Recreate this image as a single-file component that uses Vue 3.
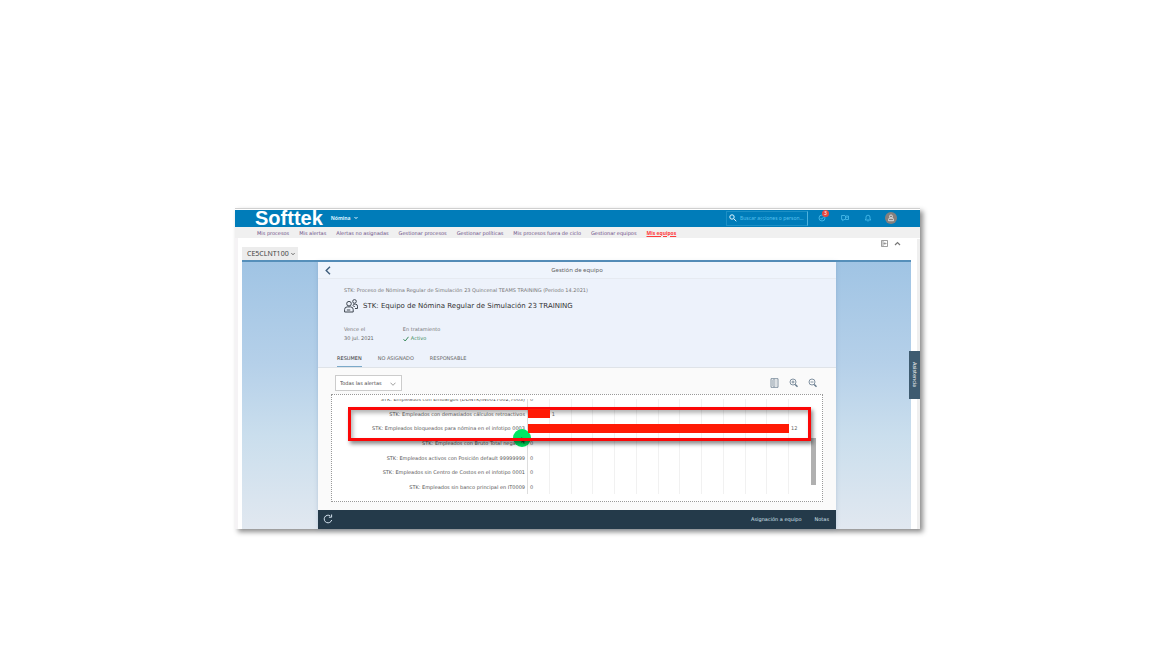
<script setup>
import { ref } from 'vue'

const navItems = [
  'Mis procesos',
  'Mis alertas',
  'Alertas no asignadas',
  'Gestionar procesos',
  'Gestionar políticas',
  'Mis procesos fuera de ciclo',
  'Gestionar equipos',
  'Mis equipos',
]
const tabs = ['RESUMEN', 'NO ASIGNADO', 'RESPONSABLE']
const active = ref('RESUMEN')
const maxValue = 12
const rows = [
  { label: 'STK: Empleados con Embargos (DDNTK/IN0017002,7003)', value: 0 },
  { label: 'STK: Empleados con demasiados cálculos retroactivos', value: 1 },
  { label: 'STK: Empleados bloqueados para nómina en el infotipo 0003', value: 12 },
  { label: 'STK: Empleados con Bruto Total negativo', value: 0 },
  { label: 'STK: Empleados activos con Posición default 99999999', value: 0 },
  { label: 'STK: Empleados sin Centro de Costos en el infotipo 0001', value: 0 },
  { label: 'STK: Empleados sin banco principal en IT0009', value: 0 },
]
</script>

<template>
  <main class="page">
    <div class="frame">
      <header class="topbar">
        <span class="brand">Softtek</span>
        <button class="module">
          Nómina
          <svg width="4" height="4" viewBox="0 0 4 4"><path d="M.5 1l1.5 1.600L3.500 1" /></svg>
        </button>
        <label class="search">
          <svg width="8" height="8" viewBox="0 0 8 8"><circle cx="3" cy="3" r="2.200" /><path d="M4.700 4.700L7.300 7.200" /></svg>
          <input type="text" aria-label="Buscar" placeholder="Buscar acciones o person..." />
        </label>
        <div class="actions">
          <button class="act" aria-label="Tareas">
            <svg width="8" height="8" viewBox="0 0 8 8"><circle cx="4" cy="4" r="3" /><path d="M2.500 4l1.200 1.200L6 2.500" /></svg>
            <span class="badge">3</span>
          </button>
          <button class="act" aria-label="Mensajes">
            <svg width="8" height="8" viewBox="0 0 8 8"><path d="M4 1.500H.6v4h1v1.200L3 5.500h1M4.500 2h3v3.500h-3zM5.200 3.300h1.500" /></svg>
          </button>
          <button class="act" aria-label="Notificaciones">
            <svg width="8" height="8" viewBox="0 0 8 8"><path d="M1.200 6h5.600L6 5V3.200a2 2 0 0 0-4 0V5zM3.400 7h1.200" /></svg>
          </button>
          <button class="avatar" aria-label="Perfil">
            <svg width="12" height="12" viewBox="0 0 12 12"><circle cx="6" cy="4.500" r="1.500" /><path d="M3.500 8.700V7.600a1.500 1.500 0 0 1 1.500-1.500h2a1.500 1.500 0 0 1 1.500 1.500v1.100z" /></svg>
          </button>
        </div>
      </header>

      <nav class="nav">
        <a v-for="(item, i) in navItems" :key="item" href="#" :class="{ current: i === 7 }">{{ item }}</a>
      </nav>

      <section class="workspace">
        <div class="systembar">
          <button class="system">
            CE5CLNT100
            <svg width="4" height="4" viewBox="0 0 4 4"><path d="M.3 1L2 2.800 3.700 1" /></svg>
          </button>
          <div class="tools">
            <button aria-label="Panel">
              <svg width="7" height="7" viewBox="0 0 7 7"><path d="M.5.5h6v6h-6zM2 1v5M3 3.500h2.500M4 2.300L3 3.500l1 1.200" /></svg>
            </button>
            <button aria-label="Contraer">
              <svg width="7" height="7" viewBox="0 0 7 7"><path class="bold" d="M1 5l2.500-2.500L6 5" /></svg>
            </button>
          </div>
        </div>

        <div class="stage">
          <article class="panel">
            <div class="titlebar">
              <button class="back" aria-label="Atrás">
                <svg width="6" height="9" viewBox="0 0 6 9"><path d="M5 .8L1.200 4.500 5 8.200" /></svg>
              </button>
              <h1>Gestión de equipo</h1>
            </div>
            <div class="object">
              <p class="process">STK: Proceso de Nómina Regular de Simulación 23 Quincenal TEAMS TRAINING (Periodo 14.2021)</p>
              <div class="team">
                <svg width="14" height="14" viewBox="0 0 14 14">
                  <circle cx="5" cy="4.700" r="2.300" />
                  <path d="M.6 13v-2.500a2.600 2.600 0 0 1 2.600-2.600h3.400a2.600 2.600 0 0 1 2.600 2.600V13zM2.800 11h3.500" />
                  <circle cx="10.500" cy="2.400" r="1.800" />
                  <path d="M9 5.200h2.500a2 2 0 0 1 2 2v2.300H11M8.600 6.500l2.200 1.200" />
                </svg>
                <h2>STK: Equipo de Nómina Regular de Simulación 23 TRAINING</h2>
              </div>
              <dl class="facts">
                <div><dt>Vence el</dt><dd>30 jul. 2021</dd></div>
                <div>
                  <dt>En tratamiento</dt>
                  <dd class="ok">
                    <svg width="6" height="6" viewBox="0 0 6 6"><path d="M.5 3.200L2.200 5 5.500.8" /></svg>Activo
                  </dd>
                </div>
              </dl>
              <div class="tabs" role="tablist">
                <button
                  v-for="tab in tabs"
                  :key="tab"
                  role="tab"
                  :aria-selected="tab === active"
                  :class="{ selected: tab === active }"
                  @click="active = tab"
                >{{ tab }}</button>
              </div>
            </div>

            <div class="content">
              <div class="filters">
                <label class="select">
                  <select aria-label="Alertas"><option>Todas las alertas</option></select>
                  <svg width="6" height="4" viewBox="0 0 6 4"><path d="M.5.7L3 3.300 5.500.7" /></svg>
                </label>
                <div class="charttools">
                  <button aria-label="Leyenda">
                    <svg width="9" height="10" viewBox="0 0 9 10"><path d="M1 .7h7v8.600H1zM4 .7v8.600M2 3h1M2 5h1M2 7h1M5.500 3h1M5.500 5h1M5.500 7h1" /></svg>
                  </button>
                  <button aria-label="Ampliar">
                    <svg width="9" height="10" viewBox="0 0 9 10"><circle cx="4" cy="4" r="3" /><path d="M2.500 4h3M4 2.500v3" /><path class="handle" d="M6.200 6.400l2.300 2.400" /></svg>
                  </button>
                  <button aria-label="Reducir">
                    <svg width="9" height="10" viewBox="0 0 9 10"><circle cx="4" cy="4" r="3" /><path d="M2.500 4h3" /><path class="handle" d="M6.200 6.400l2.300 2.400" /></svg>
                  </button>
                </div>
              </div>

              <div class="chart">
                <div class="viewport">
                  <div class="gridlines"><i v-for="n in 12" :key="n"></i></div>
                  <div class="rows">
                    <div v-for="row in rows" :key="row.label" class="row">
                      <span class="label">{{ row.label }}</span>
                      <span class="plot">
                        <span v-if="row.value" class="bar" :style="{ width: (row.value / maxValue) * 100 + '%' }"></span>
                        <span class="value">{{ row.value }}</span>
                      </span>
                    </div>
                  </div>
                </div>
                <div class="scroll"></div>
                <div class="pointer">
                  <svg width="18" height="18" viewBox="0 0 18 18"><circle cx="9" cy="9" r="9" /><path d="M8.500 8v6l1.400-1.200.9 1.900.9-.5-.9-1.700h1.700z" /></svg>
                </div>
                <div class="highlight"></div>
              </div>
            </div>

            <footer class="footer">
              <button aria-label="Actualizar">
                <svg width="10" height="10" viewBox="0 0 10 10"><path d="M8.700 6A3.800 3.800 0 1 1 7.200 1.900M8.600.5v2.700H5.900" /></svg>
              </button>
              <button class="assign">Asignación a equipo</button>
              <button>Notas</button>
            </footer>
          </article>
        </div>
      </section>
      <button class="help">Asistencia</button>
    </div>
  </main>
</template>

<style>
body { background: #fff; }
</style>

<style scoped>
* { box-sizing: border-box; }
.page {
  padding: 208px 232px 119px 235px;
  font-family: "DejaVu Sans", "Noto Sans", sans-serif;
  font-size: 5px;
  line-height: 8px;
  color: #666;
}
button, input, select { font: inherit; color: inherit; background: none; border: 0; padding: 0; margin: 0; }
button { cursor: pointer; white-space: nowrap; }
h1, h2, p, dl, dd { margin: 0; font-weight: 400; }
svg { display: block; flex: none; fill: none; stroke: currentColor; }
a { color: inherit; text-decoration: none; }
.frame {
  position: relative;
  border-top: 1px solid #d0d0d0;
  padding-top: 1px;
  background: #fff;
  box-shadow: 3px 3px 5px rgba(0, 0, 0, .45);
}
.topbar {
  display: flex;
  align-items: center;
  height: 17px;
  padding: 0 23px 0 20px;
  background: #007cb9;
  color: #c9ecff;
  font-family: "Noto Sans", sans-serif;
}
.brand { font: bold 20px/16px "Liberation Sans", Arial, sans-serif; color: #fff; margin-bottom: 1px; }
.module { display: flex; align-items: center; gap: 3px; margin: 0 0 2px 8px; font-weight: 700; color: #d9f2ff; }
.search {
  display: flex;
  align-items: center;
  gap: 3px;
  width: 82px;
  height: 15px;
  margin-left: auto;
  padding: 0 2px 2px;
  border: 1px solid #1c8fc5;
  border-right-color: #4fb2dd;
}
.search svg { color: #e0f5ff; }
.search input { width: 100%; min-width: 0; outline: 0; }
.search input::placeholder { color: #55c0ee; opacity: 1; }
.actions { display: flex; align-items: center; margin: 0 0 2px 10px; gap: 15px; color: #4fc0ef; }
.act { position: relative; }
.act svg { stroke-width: .8; }
.badge {
  position: absolute;
  left: 4px;
  top: -4px;
  width: 7px;
  height: 7px;
  border-radius: 50%;
  background: #e5483f;
  color: #fff;
  line-height: 7px;
}
.avatar { border-radius: 50%; background: #85807e; color: #ddd; margin-left: -2px; }
.nav {
  display: flex;
  align-items: center;
  gap: 10px;
  height: 11px;
  padding: 0 22px;
  background: #f0f0f0;
  color: #6b4f86;
  white-space: nowrap;
}
.nav .current { color: #ff3b3b; font-family: "Noto Sans", sans-serif; font-weight: 700; text-decoration: underline; }
.workspace { padding: 0 6px 0 4px; margin-right: 3px; border-left: 3px solid #f5f3f5; }
.frame::after {
  content: "";
  position: absolute;
  right: 0;
  top: 30px;
  bottom: 0;
  width: 3px;
  background: #efefef;
}
.systembar {
  display: flex;
  align-items: flex-end;
  justify-content: space-between;
  height: 24px;
  border-bottom: 2px solid #558fba;
}
.system {
  display: flex;
  align-items: center;
  gap: 2px;
  height: 13px;
  padding: 1px 3px 0 5px;
  background: #ececec;
  color: #444;
  font-family: "Noto Sans", sans-serif;
  font-size: 7px;
}
.system svg { stroke-width: .7; }
.tools { display: flex; gap: 6px; padding-right: 10px; margin-bottom: 13px; color: #777; }
.tools svg { stroke-width: .7; }
.tools .bold { stroke-width: 1.200; }
.stage {
  padding: 0 75px 0 76px;
  background: linear-gradient(#a0c4e4, #b5d0e9 38%, #cadeed 65%, #e1e8f0);
}
.panel { background: #fafafa; box-shadow: 0 0 4px rgba(70, 110, 150, .25); }
.titlebar {
  display: grid;
  grid-template-columns: 20px 1fr 20px;
  align-items: center;
  height: 17px;
  background: #eff4fc;
  border-bottom: 1px solid #e6eaf1;
}
.back { justify-self: center; color: #3f5e7c; }
.back svg { stroke-width: 1.400; }
h1 { font-family: "Noto Sans", sans-serif; font-size: 6px; text-align: center; color: #666; }
.object { padding: 7px 20px 0 26px; background: #edf2fb; border-bottom: 1px solid #dfe3e8; }
.process { color: #777; white-space: nowrap; }
.team { display: flex; align-items: center; gap: 5px; margin-top: 5px; color: #3e4650; }
h2 { font-size: 7px; line-height: 14px; white-space: nowrap; color: #333; }
.facts { display: flex; gap: 29px; margin-top: 12px; }
.facts dt { line-height: 9px; color: #777; }
.facts dd { line-height: 9px; }
.ok { display: flex; align-items: center; gap: 2px; color: #3a8a5b; }
.tabs { display: flex; gap: 16px; margin: 8px 0 0 -7px; }
.tabs button { height: 16px; padding-bottom: 1px; border-bottom: 1px solid transparent; color: #666; }
.tabs .selected { border-color: #7ba9c9; color: #333; }
.content { padding: 7px 13px 8px; }
.filters { display: flex; align-items: center; justify-content: space-between; padding: 0 6px 0 4px; }
.select { position: relative; width: 67px; height: 16px; }
.select select {
  width: 100%;
  height: 100%;
  padding: 0 14px 0 4px;
  appearance: none;
  background: #fff;
  border: 1px solid #ccc;
  color: #444;
}
.select svg { position: absolute; right: 6px; top: 7px; color: #777; stroke-width: .7; }
.charttools { display: flex; gap: 10px; color: #65798b; }
.charttools svg { stroke-width: .8; }
.charttools .handle { stroke-width: 1.400; }
.chart {
  position: relative;
  margin-top: 3px;
  padding: 4px 0 7px;
  border: 1px dotted #999;
  background: #fff;
}
.viewport { overflow: hidden; padding-right: 33px; position: relative; }
.rows { display: grid; grid-template-rows: repeat(7, 1fr); height: 102px; margin-top: -7px; padding-bottom: 0; }
.row { display: grid; grid-template-columns: 193px 1fr; column-gap: 3px; align-items: center; }
.label { text-align: right; white-space: nowrap; color: #555; }
.plot { display: flex; align-items: center; white-space: nowrap; }
.bar { position: relative; z-index: 2; flex: none; height: 9px; background: #ff1a05; }
.value { margin-left: 2px; color: #666; }
.gridlines {
  position: absolute;
  inset: 0 33px 0 195px;
  display: grid;
  grid-template-columns: repeat(12, 1fr);
  border-left: 1px solid #ddd;
}
.gridlines i { border-right: 1px solid #f1f1f1; }
.scroll { position: absolute; right: 6px; top: 43px; width: 5px; height: 47px; background: #b0b0b0; }
.highlight {
  position: absolute;
  z-index: 1;
  inset: 12px 11px 60px 16px;
  border: 3px solid #fb0707;
  box-shadow: 2px 3px 4px rgba(0, 0, 0, .45), inset 2px 3px 4px rgba(0, 0, 0, .3);
}
.pointer { position: absolute; left: 181px; top: 34px; }
.pointer circle { fill: #00e763; stroke: none; }
.pointer path { fill: #064d25; stroke: none; }
.footer { display: flex; align-items: center; height: 19px; padding: 0 7px 1px 5px; background: #243a4a; color: #d5e3ef; }
.assign { margin: 0 13px 0 auto; }
.help {
  position: absolute;
  z-index: 1;
  right: 0;
  top: 142px;
  width: 11px;
  height: 48px;
  background: #3e5b70;
  color: #fff;
  writing-mode: vertical-rl;
}
</style>
